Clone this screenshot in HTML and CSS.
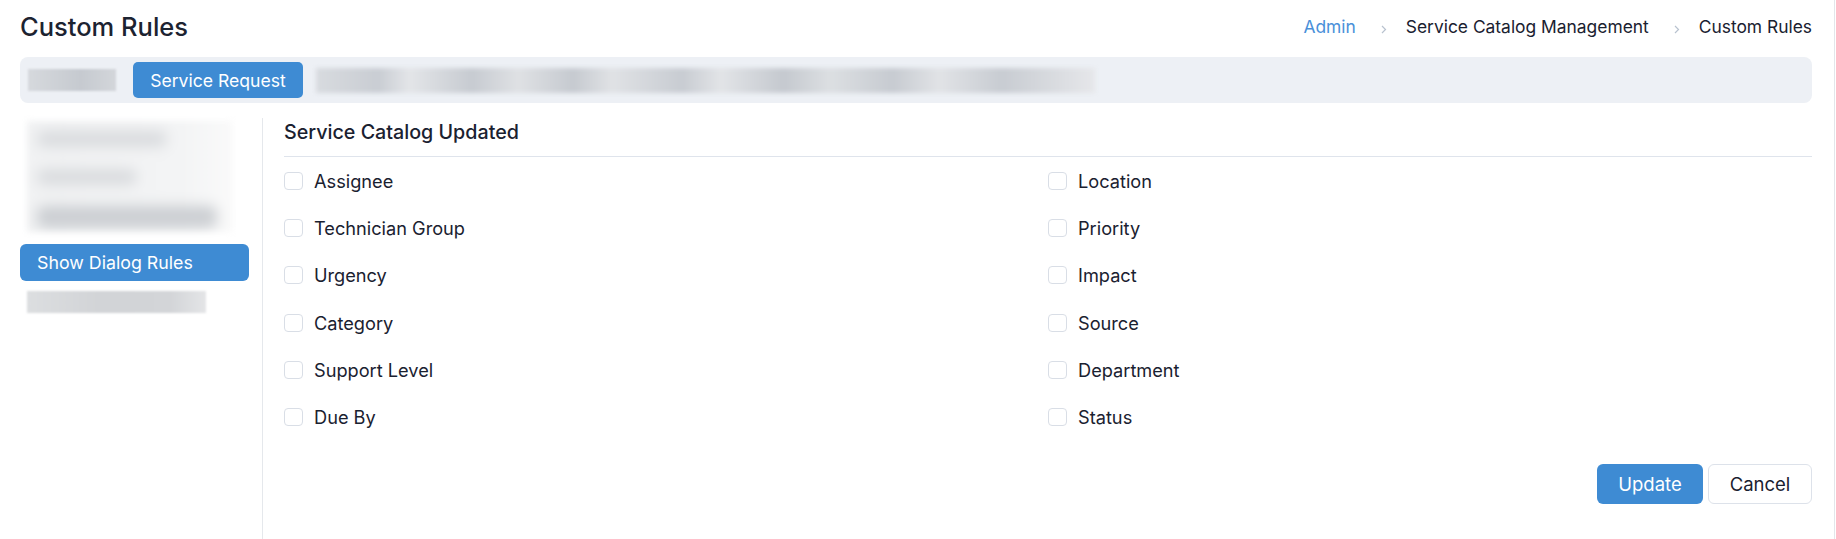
FILE: index.html
```html
<!DOCTYPE html>
<html lang="en">
<head>
<meta charset="utf-8">
<title>Custom Rules</title>
<link rel="stylesheet" href="styles.css">
</head>
<body>
<div class="page">
  <header class="topbar">
    <h1 class="title">Custom Rules</h1>
    <nav class="crumbs">
      <a class="crumb crumb-link">Admin</a>
      <svg class="sep" width="6" height="9" viewBox="0 0 6 9"><path d="M1 1l3.5 3.5L1 8" fill="none" stroke="#b8c2cf" stroke-width="1.2"/></svg>
      <span class="crumb">Service Catalog Management</span>
      <svg class="sep" width="6" height="9" viewBox="0 0 6 9"><path d="M1 1l3.5 3.5L1 8" fill="none" stroke="#b8c2cf" stroke-width="1.2"/></svg>
      <span class="crumb">Custom Rules</span>
    </nav>
  </header>

  <div class="tabs">
    <span class="blur blur-tab"></span>
    <button class="tab tab-active">Service Request</button>
    <span class="blur blur-tabs"></span>
  </div>

  <div class="main">
    <aside class="side">
      <div class="side-blur">
        <span class="sb sb1"></span>
        <span class="sb sb2"></span>
        <span class="sb sb3"></span>
      </div>
      <button class="side-item side-active">Show Dialog Rules</button>
      <span class="blur blur-side"></span>
    </aside>

    <section class="content">
      <h2 class="section-title">Service Catalog Updated</h2>
      <div class="fields">
        <label class="field"><span class="box"></span>Assignee</label>
        <label class="field"><span class="box"></span>Location</label>
        <label class="field"><span class="box"></span>Technician Group</label>
        <label class="field"><span class="box"></span>Priority</label>
        <label class="field"><span class="box"></span>Urgency</label>
        <label class="field"><span class="box"></span>Impact</label>
        <label class="field"><span class="box"></span>Category</label>
        <label class="field"><span class="box"></span>Source</label>
        <label class="field"><span class="box"></span>Support Level</label>
        <label class="field"><span class="box"></span>Department</label>
        <label class="field"><span class="box"></span>Due By</label>
        <label class="field"><span class="box"></span>Status</label>
      </div>
      <div class="actions">
        <button class="btn btn-primary">Update</button>
        <button class="btn btn-default">Cancel</button>
      </div>
    </section>
  </div>
</div>
</body>
</html>
```

FILE: styles.css
```css
* { box-sizing: border-box; }
html, body { margin: 0; padding: 0; background: #fff; }
body {
  font-family: Inter, "Noto Sans", "Liberation Sans", sans-serif;
  color: #1a2130;
  font-size: 18px;
}
.page {
  width: 1835px;
  height: 539px;
  padding: 0 22px 0 20px;
  border-right: 1px solid #e3e6ea;
  display: flex;
  flex-direction: column;
  overflow: hidden;
}
.topbar {
  height: 57px;
  padding-bottom: 4px;
  display: flex;
  align-items: center;
  justify-content: space-between;
}
.title {
  margin: 0;
  font-size: 25.5px;
  font-weight: 500;
  color: #1c2331;
}
.crumbs {
  display: flex;
  align-items: center;
  font-size: 17.4px;
}
.crumb { color: #1a2130; }
.crumb-link { color: #4a90d9; text-decoration: none; }
.sep { margin: 6px 19px 0 25px; }

.tabs {
  height: 46px;
  background: #edf0f5;
  border-radius: 8px;
  display: flex;
  align-items: center;
  padding: 0 8px;
}
.blur { display: block; background: #cfd3d8; filter: blur(1px); }
.blur-tab { width: 88px; height: 22px; margin-right: 17px; background: linear-gradient(90deg, #d6d9dd, #c6cad0 60%, #d3d6da); }
.tab {
  font-family: inherit;
  font-size: 17.6px;
  border: 0;
  height: 36px;
  width: 170px;
  border-radius: 5px;
  cursor: pointer;
  padding: 0;
}
.tab-active { background: #3e8bd3; color: #fff; }
.blur-tabs {
  width: 779px;
  height: 25px;
  margin-left: 13px;
  background: linear-gradient(90deg, #d8dbdf 0%, #c9cdd3 8%, #e3e5e8 12%, #c7cbd1 20%, #dfe1e4 26%, #c6cad0 33%, #e0e2e5 38%, #c8ccd2 47%, #e2e4e7 52%, #c5c9cf 60%, #dcdfe2 66%, #c7cbd1 74%, #e1e3e6 80%, #c8ccd2 88%, #e6e7ea 100%);
  filter: blur(2px);
}

.main {
  flex: 1;
  display: flex;
  margin-top: 15px;
}
.side {
  width: 243px;
  border-right: 1px solid #e5e8ec;
  padding-top: 3px;
  display: flex;
  flex-direction: column;
  align-items: flex-start;
}
.side-blur {
  width: 206px;
  height: 111px;
  margin-left: 7px;
  background: linear-gradient(90deg, #f1f2f3, #f3f4f5 75%, #fafafa);
  display: flex;
  flex-direction: column;
  justify-content: space-between;
  padding: 10px 0 4px 10px;
  overflow: hidden;
  filter: blur(3px);
}
.sb { display: block; height: 16px; background: #d9dbde; border-radius: 8px; filter: blur(6px); }
.sb1 { width: 130px; }
.sb2 { width: 100px; }
.sb3 { width: 180px; height: 22px; background: #cbced2; }
.side-item {
  margin-top: 12px;
  width: 229px;
  height: 37px;
  border: 0;
  border-radius: 6px;
  font-family: inherit;
  font-size: 17.8px;
  text-align: left;
  padding: 0 17px;
  cursor: pointer;
}
.side-active { background: #3e8bd3; color: #fff; }
.blur-side {
  margin-top: 10px;
  margin-left: 7px;
  width: 179px;
  height: 22px;
  background: linear-gradient(90deg, #dcdee0, #d2d4d7 40%, #d3d5d8 80%, #e4e5e7);
}

.content {
  flex: 1;
  padding-left: 21px;
  display: flex;
  flex-direction: column;
}
.section-title {
  margin: 0;
  font-size: 19.7px;
  font-weight: 500;
  line-height: 28px;
  padding-bottom: 10px;
  border-bottom: 1px solid #dfe4ec;
  color: #1a2130;
}
.fields {
  display: grid;
  grid-template-columns: 1fr 1fr;
  grid-auto-rows: 47.33px;
}
.field {
  display: flex;
  align-items: center;
  font-size: 18.2px;
  color: #1a2130;
}
.box {
  width: 19px;
  height: 18px;
  border: 1px solid #d9dee6;
  border-radius: 4px;
  margin-right: 11px;
  background: #fff;
}
.actions {
  display: flex;
  justify-content: flex-end;
  gap: 5px;
  margin-top: 23px;
}
.btn {
  font-family: inherit;
  font-size: 18.5px;
  height: 40px;
  border-radius: 6px;
  cursor: pointer;
  padding: 0;
}
.btn-primary { width: 106px; background: #3e8bd3; color: #fff; border: 0; }
.btn-default { width: 104px; background: #fff; color: #1a2130; border: 1px solid #dde2ea; }
```
